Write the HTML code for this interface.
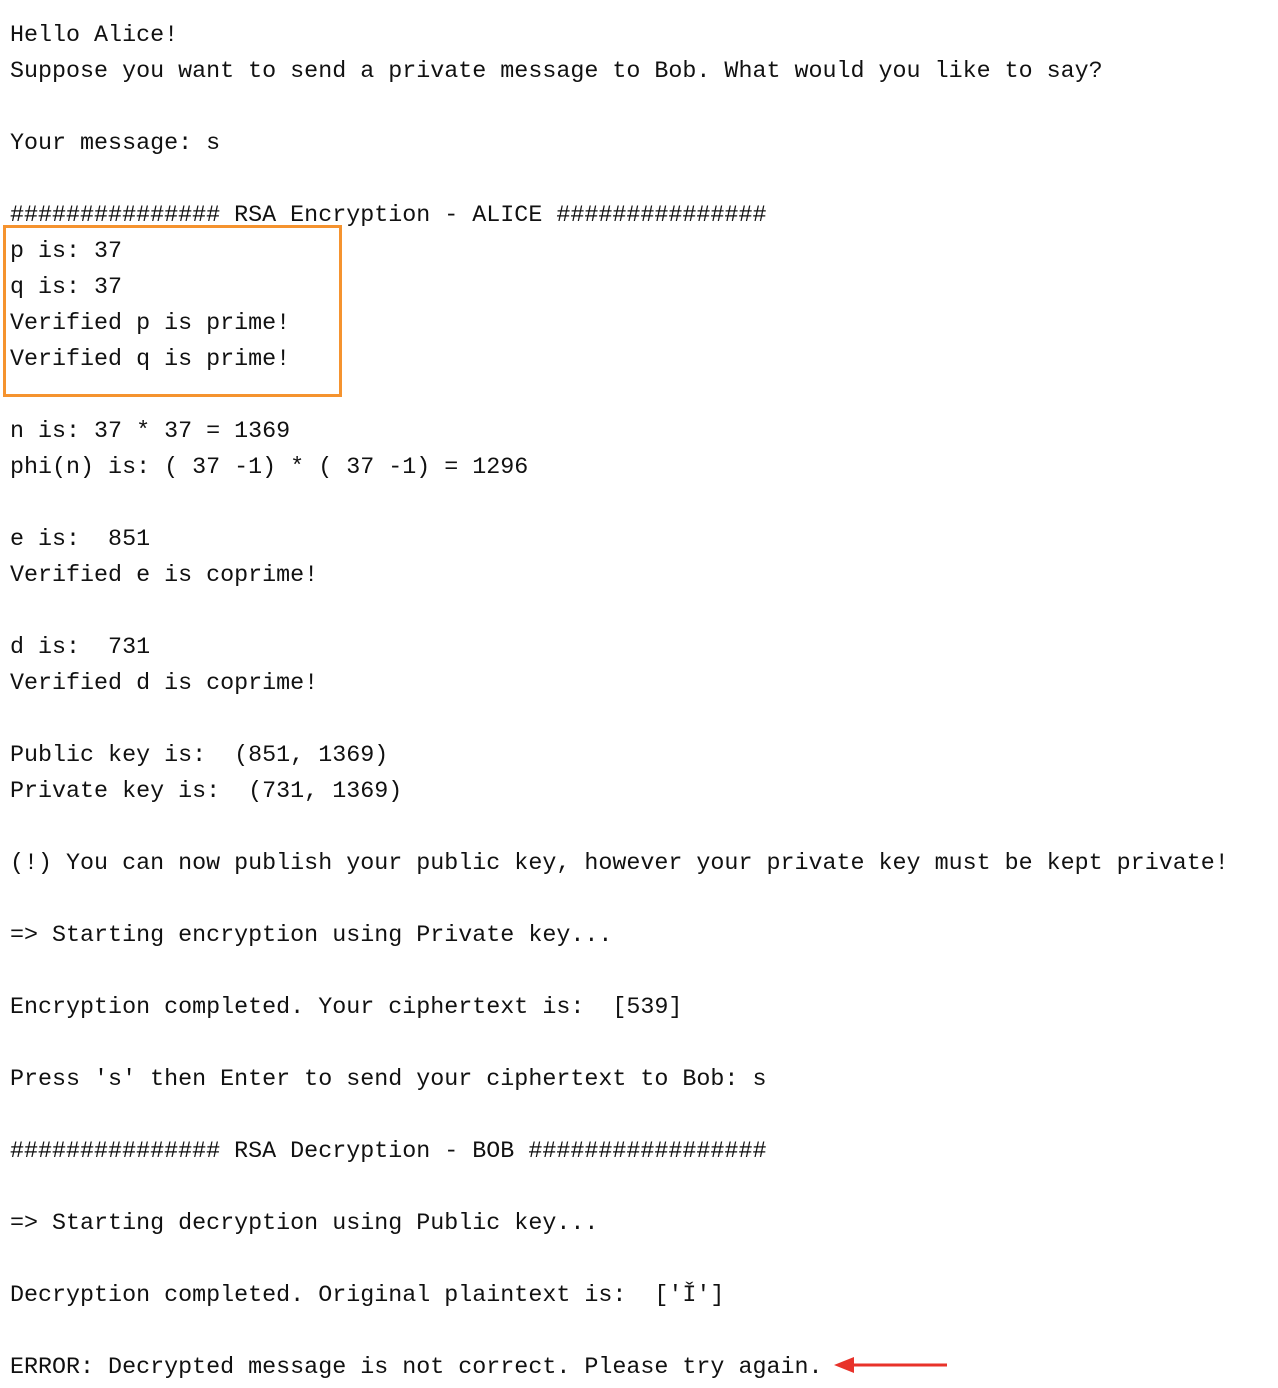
<!DOCTYPE html>
<html><head><meta charset="utf-8"><style>
html,body{margin:0;padding:0;background:#fff;width:1278px;height:1388px;overflow:hidden;position:relative}
pre{margin:0;position:absolute;left:10px;top:18px;font-family:"Liberation Mono",monospace;font-size:23.35px;line-height:36px;color:#111}
.box{position:absolute;left:3px;top:225px;width:333px;height:166px;border:3px solid #f5932f}
svg{position:absolute;left:830px;top:1352px}
</style></head><body>
<pre>Hello Alice!
Suppose you want to send a private message to Bob. What would you like to say?

Your message: s

############### RSA Encryption - ALICE ###############
p is: 37
q is: 37
Verified p is prime!
Verified q is prime!

n is: 37 * 37 = 1369
phi(n) is: ( 37 -1) * ( 37 -1) = 1296

e is:  851
Verified e is coprime!

d is:  731
Verified d is coprime!

Public key is:  (851, 1369)
Private key is:  (731, 1369)

(!) You can now publish your public key, however your private key must be kept private!

=> Starting encryption using Private key...

Encryption completed. Your ciphertext is:  [539]

Press 's' then Enter to send your ciphertext to Bob: s

############### RSA Decryption - BOB #################

=> Starting decryption using Public key...

Decryption completed. Original plaintext is:  ['Ǐ']

ERROR: Decrypted message is not correct. Please try again.</pre>
<div class="box"></div>
<svg width="120" height="26" viewBox="0 0 120 26"><line x1="18" y1="13" x2="117" y2="13" stroke="#e8322a" stroke-width="3"/><polygon points="4,13 24,5 24,21" fill="#e8322a"/></svg>
</body></html>
